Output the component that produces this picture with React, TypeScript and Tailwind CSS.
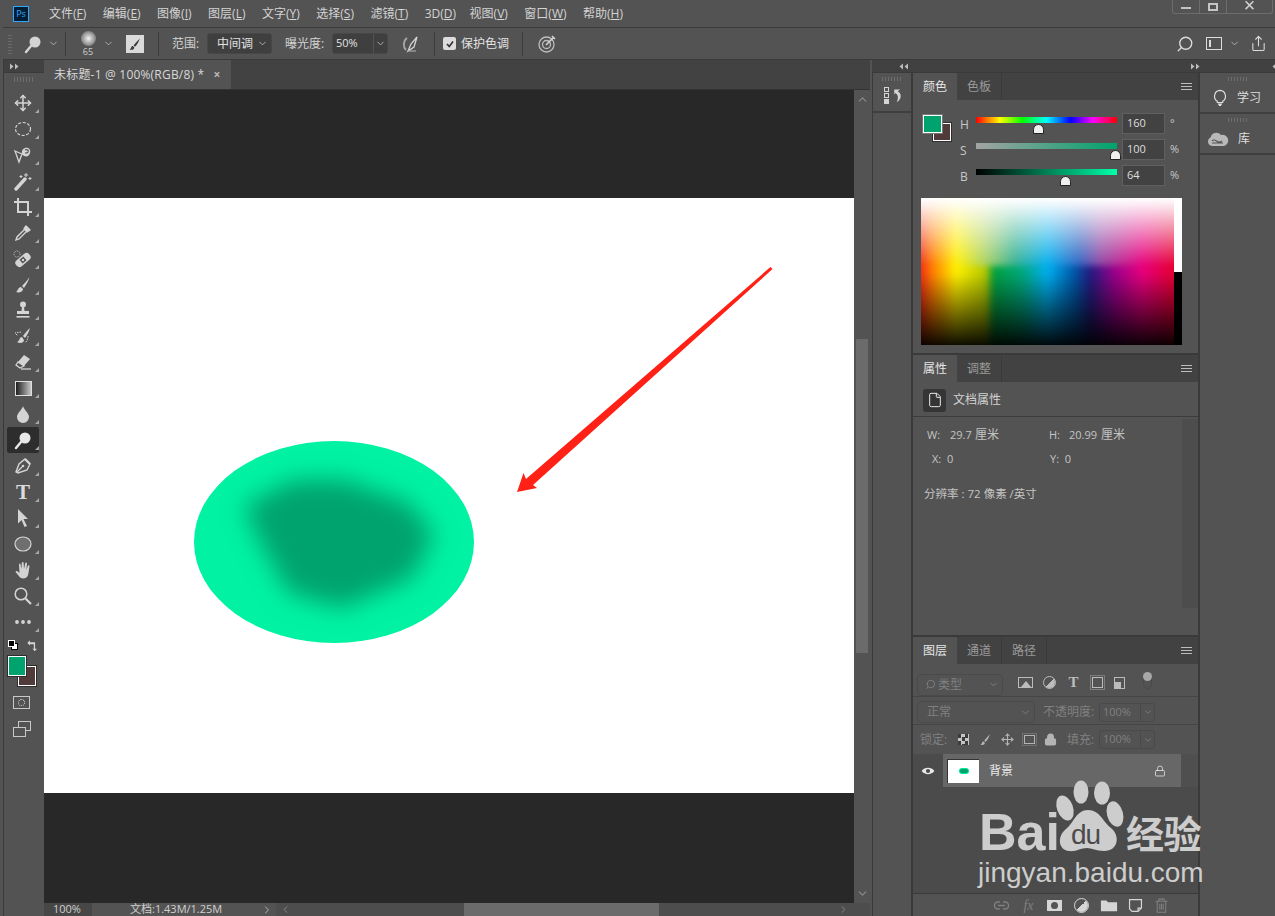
import React from 'react'
import { ChevronDown, ChevronUp, ChevronLeft, ChevronRight, Move, Search, Share, Lock, Link2, File } from 'lucide-react'

const MENU: [string, string][] = [
  ['文件', 'F'],
  ['编辑', 'E'],
  ['图像', 'I'],
  ['图层', 'L'],
  ['文字', 'Y'],
  ['选择', 'S'],
  ['滤镜', 'T'],
  ['3D', 'D'],
  ['视图', 'V'],
  ['窗口', 'W'],
  ['帮助', 'H'],
]

const C = '#d4d4d4'

function Svg({ children, size = 20 }: { children: React.ReactNode; size?: number }) {
  return (
    <svg width={size} height={size} viewBox="0 0 20 20" fill="none" className="block shrink-0">
      {children}
    </svg>
  )
}

// double arrows on the collapse strips
const Arrows = ({ left = false }: { left?: boolean }) => (
  <svg width="9" height="7" viewBox="0 0 9 7" className={left ? 'block -scale-x-100' : 'block'}>
    <path d="M0 0.5 L3.5 3.5 L0 6.5 Z M5 0.5 L8.5 3.5 L5 6.5 Z" fill="#bdbdbd" />
  </svg>
)

const DodgeIcon = ({ color = C }: { color?: string }) => (
  <Svg>
    <circle cx="12" cy="8" r="5.5" fill={color} />
    <path d="M8 12 L3 18" stroke={color} strokeWidth="2.4" strokeLinecap="round" />
  </Svg>
)

const TOOLS: React.ReactNode[] = [
  <Move size={18} color={C} strokeWidth={2} />,
  <Svg><ellipse cx="10" cy="10" rx="7.5" ry="6.5" stroke={C} strokeWidth="1.2" strokeDasharray="3 1.6" /></Svg>,
  <Svg>
    <path d="M2 6 L9 9 L6 17 Z" stroke={C} strokeWidth="1.3" />
    <path d="M9 9 C8 4 12 2 15 3 C18 4 18 9 15 11 C13 12 10 11 9 9 Z" fill={C} />
    <path d="M12 5 C14 4 16 5 15 7 M12 8 C14 8 15 8 15 7" stroke="#535353" strokeWidth="1.2" />
  </Svg>,
  <Svg>
    <path d="M3 18 L12 8" stroke={C} strokeWidth="3.4" strokeLinecap="round" />
    <path d="M13 2 v4 M11 4 h4 M17 6 v3 M15.5 7.5 h3 M8 4 v3 M6.5 5.5 h3" stroke={C} strokeWidth="1" />
  </Svg>,
  <Svg>
    <path d="M1 5 H15 V19 M5 1 V15 H19" stroke={C} strokeWidth="2" />
  </Svg>,
  <Svg>
    <path d="M13 3 L17 7 L14 9 L11 6 Z" fill={C} stroke={C} strokeWidth="1.5" strokeLinejoin="round" />
    <path d="M11 7 L4 14 L3 17 L6 16 L13 9" stroke={C} strokeWidth="1.4" />
  </Svg>,
  <Svg>
    <rect x="1.5" y="7" width="17" height="8" rx="3.5" transform="rotate(-40 10 11)" fill={C} />
    <circle cx="4" cy="5" r="3" stroke={C} strokeWidth="0.9" strokeDasharray="1 1" />
    <rect x="7.5" y="8.5" width="5" height="5" transform="rotate(-40 10 11)" fill="#535353" />
    <circle cx="10" cy="11" r="1.2" fill={C} />
  </Svg>,
  <Svg>
    <path d="M16.5 2 C14 6 11 9 9 11 L11 13 C13 10 15.5 6 16.5 2 Z" fill={C} />
    <path d="M8 12 C5 12 5 16 3 17 C6 18 10 17 10 14 Z" fill={C} />
  </Svg>,
  <Svg>
    <circle cx="10" cy="4.5" r="3" fill={C} />
    <path d="M9 7 h2 l0.5 4 h4.5 v3 h-12 v-3 h4.5 Z" fill={C} />
    <rect x="3.5" y="16" width="13" height="1.6" fill={C} />
  </Svg>,
  <Svg>
    <path d="M17 2 C14 5 12 7 10 10 L12 12 C14 9 16 6 17 2 Z" fill={C} />
    <path d="M9 11 C6 11 7 15 4 16 C7 18 11 17 11 14 Z" fill={C} />
    <path d="M8 6 L2 7 L5 10 M15 10 C15 13 14 15 12 17" stroke={C} strokeWidth="1" strokeDasharray="1.5 1" />
  </Svg>,
  <Svg>
    <path d="M11 3 L17 7 L11 14 L5 10 Z" fill={C} />
    <path d="M5 10 L3 13 L7 16 L9 15 L11 14 Z" stroke={C} strokeWidth="1.3" />
    <path d="M8 17 H18" stroke={C} strokeWidth="1.3" />
  </Svg>,
  <div className="h-[15px] w-[17px] border border-[#e0e0e0] bg-[linear-gradient(90deg,#1e1e1e,#c8c8c8)]" />,
  <Svg><path d="M10 2 C11 6 16 9 16 13 A6 6 0 0 1 4 13 C4 9 9 6 10 2 Z" fill={C} /></Svg>,
  <DodgeIcon color="#e8e8e8" />,
  <Svg>
    <path d="M13 2 L18 7 L15 13 L6 16 L4 15 L7 7 Z" stroke={C} strokeWidth="1.4" transform="translate(-1 1)" />
    <path d="M4 16 L9 11" stroke={C} strokeWidth="1.2" />
    <circle cx="10" cy="10" r="1.3" fill={C} />
    <path d="M12 3 L17 8" stroke={C} strokeWidth="2.2" />
  </Svg>,
  <span className="font-['Liberation_Serif',serif] text-[21px] leading-none font-bold text-[#dcdcdc]">T</span>,
  <Svg><path d="M5 1 L15 11 L10.5 11 L14 18 L11.5 19 L8.5 12 L5 15.5 Z" fill={C} /></Svg>,
  <Svg><ellipse cx="10" cy="10" rx="8" ry="7" fill="#6f6f6f" stroke={C} strokeWidth="1.2" /></Svg>,
  <Svg>
    <path d="M4 11 L6.5 13 L6 4 Q6.5 3 7.5 4 L8.5 9 L8.8 2.5 Q9.8 1.5 10.6 2.5 L11 9 L12.3 3 Q13.2 2 14 3.2 L13.4 10 L15 5.5 Q16 5 16.5 6 L15.5 13 Q15 18 10.5 18.5 Q7 18.5 5.5 15.5 L2.5 12 Q3 10.5 4 11 Z" fill={C} />
  </Svg>,
  <Svg>
    <circle cx="8" cy="8" r="5.8" stroke={C} strokeWidth="1.5" />
    <path d="M12.5 12.5 L18 18" stroke={C} strokeWidth="2.2" />
  </Svg>,
  <Svg>
    <circle cx="4" cy="10" r="1.9" fill={C} />
    <circle cx="10" cy="10" r="1.9" fill={C} />
    <circle cx="16" cy="10" r="1.9" fill={C} />
  </Svg>,
]

function ToolBar() {
  return (
    <div className="flex w-[41px] shrink-0 flex-col border-l border-[#3a3a3a] bg-[#535353]">
      <div className="flex h-[13px] items-center border-b border-[#3a3a3a] bg-[#414141] pl-[6px]">
        <Arrows />
      </div>
      <div className="mx-auto mt-[4px] h-[5px] w-[20px] bg-[repeating-linear-gradient(90deg,#6e6e6e_0_1px,transparent_1px_3px)]" />
      <div className="mt-[8px] flex flex-col pr-[2px] pl-[3px]">
        {TOOLS.map((t, i) => (
          <div
            key={i}
            className={
              i === 13
                ? 'relative flex h-[25.95px] w-[32px] items-center justify-center rounded-[2px] bg-[#2d2d2d]'
                : 'relative flex h-[25.95px] w-[32px] items-center justify-center'
            }
          >
            {t}
            <span className="absolute right-[0px] bottom-[3px] h-0 w-0 border-b-[4px] border-l-[4px] border-b-[#a8a8a8] border-l-transparent" />
          </div>
        ))}
      </div>
      <div className="mt-[4px] flex items-center gap-[7px] pl-[4px]">
        <div className="relative h-[11px] w-[11px]">
          <span className="absolute top-[3px] left-[3px] h-[7px] w-[7px] border border-black bg-white" />
          <span className="absolute top-0 left-0 h-[7px] w-[7px] border border-white bg-black" />
        </div>
        <Svg size={13}>
          <path d="M2 6 L6 2 L6 5 H14 V15 H17 L13.5 19 L10 15 H12 V8 H6 V10 Z" fill={C} />
        </Svg>
      </div>
      <div className="relative mt-[4px] ml-[4px] h-[30px] w-[30px]">
        <span className="absolute top-[10px] left-[10px] h-[20px] w-[18px] border-[1.5px] border-white bg-[#503a3a] outline outline-[#2d2d2d]" />
        <span className="absolute top-0 left-0 h-[20px] w-[18px] border-[1.5px] border-white bg-[#00a36d] outline outline-[#2d2d2d]" />
      </div>
      <div className="mt-[10px] flex flex-col items-center pr-[5px]">
        <div className="flex h-[13px] w-[17px] items-center justify-center border border-[#c8c8c8]">
          <span className="h-[7px] w-[7px] rounded-full border border-dotted border-[#dadada]" />
        </div>
        <div className="relative mt-[12px] h-[16px] w-[18px]">
          <span className="absolute top-0 right-0 h-[10px] w-[13px] border border-[#c8c8c8]" />
          <span className="absolute bottom-0 left-0 h-[10px] w-[13px] border border-[#c8c8c8] bg-[#535353]" />
        </div>
      </div>
    </div>
  )
}

function OptionsBar() {
  const Sep = () => <span className="block h-[24px] w-px bg-[#3c3c3c]" />
  return (
    <div className="ml-[3px] flex h-[33px] items-center border-y border-[#3a3a3a] text-[12px] text-[#d2d2d2]">
      <span className="ml-[5px] h-[20px] w-[4px] bg-[repeating-linear-gradient(0deg,#6a6a6a_0_1px,transparent_1px_3px)]" />
      <span className="ml-[11px]"><DodgeIcon /></span>
      <ChevronDown size={11} className="ml-[5px] text-[#b4b4b4]" />
      <span className="ml-[6px]"><Sep /></span>
      <div className="ml-[12px] flex w-[20px] flex-col items-center">
        <span className="h-[15px] w-[15px] rounded-full bg-[radial-gradient(circle,#f2f2f2,#909090_60%,#5a5a5a)]" />
        <span className="mt-px text-[9px] leading-none text-[#cfcfcf]">65</span>
      </div>
      <ChevronDown size={11} className="ml-[5px] text-[#b4b4b4]" />
      <div className="ml-[12px] flex h-[18px] w-[18px] items-center justify-center bg-[#dadada]">
        <Svg size={14}><path d="M17 2 C13 6 10 9 8 12 L10 14 C13 11 15 7 17 2 Z M7 13 C4 13 5 17 2 18 C6 19 9 18 9 15 Z" fill="#3c3c3c" /></Svg>
      </div>
      <span className="ml-[14px]"><Sep /></span>
      <span className="ml-[13px] w-[35px]">范围:</span>
      <div className="flex h-[21px] w-[65px] items-center justify-between rounded-[3px] border border-[#474747] bg-[#3f3f3f] pr-[3px] pl-[9px] text-[#e2e2e2]">
        中间调
        <ChevronDown size={11} className="text-[#b4b4b4]" />
      </div>
      <span className="ml-[13px] w-[47px]">曝光度:</span>
      <div className="flex h-[21px] w-[56px] items-center rounded-[3px] border border-[#474747] bg-[#3f3f3f] pl-[3px] text-[11px] text-[#e2e2e2]">
        <span className="w-[37px]">50%</span>
        <span className="flex h-full flex-1 items-center justify-center border-l border-[#535353]">
          <ChevronDown size={11} className="text-[#b4b4b4]" />
        </span>
      </div>
      <span className="ml-[12px]">
        <Svg>
          <path d="M7 4 C3 7 3 13 6 16" stroke="#a8a8a8" strokeWidth="1.8" />
          <path d="M17 3 L11 10 L8 17 L14 13 Z" stroke={C} strokeWidth="1.3" />
          <path d="M8 17 H16" stroke="#a8a8a8" strokeWidth="1.2" />
        </Svg>
      </span>
      <span className="ml-[14px]"><Sep /></span>
      <span className="ml-[8px] flex h-[13px] w-[13px] items-center justify-center rounded-[2px] bg-[#dcdcdc]">
        <Svg size={10}><path d="M4 10 L8.5 15 L16 5" stroke="#333" strokeWidth="3.4" /></Svg>
      </span>
      <span className="ml-[5px] text-[12px] text-[#e4e4e4]">保护色调</span>
      <span className="ml-[13px]"><Sep /></span>
      <span className="ml-[14px]">
        <Svg>
          <circle cx="9.5" cy="10.5" r="7.5" stroke="#bdbdbd" strokeWidth="1.3" />
          <circle cx="9.5" cy="10.5" r="4" stroke="#bdbdbd" strokeWidth="1.3" />
          <path d="M9 11 L17 3 M15 2 L18 5" stroke={C} strokeWidth="1.6" />
        </Svg>
      </span>
      <div className="ml-auto flex items-center pr-[8px]">
        <Search size={18} strokeWidth={1.8} className="-scale-x-100 text-[#dcdcdc]" />
        <span className="ml-[12px] flex h-[13px] w-[16px] items-center border border-[#dcdcdc] pl-[2px]">
          <span className="h-[7px] w-[2px] bg-[#dcdcdc]" />
        </span>
        <ChevronDown size={11} className="ml-[7px] text-[#b4b4b4]" />
        <Share size={17} strokeWidth={1.5} className="ml-[10px] text-[#dcdcdc]" />
      </div>
    </div>
  )
}

function CanvasDrawing() {
  return (
    <svg viewBox="0 0 810 595" className="block h-full w-full">
      <defs>
        <filter id="soft" x="-30%" y="-30%" width="160%" height="160%">
          <feGaussianBlur stdDeviation="12" />
        </filter>
        <clipPath id="oval">
          <ellipse cx="290" cy="344" rx="140" ry="101" />
        </clipPath>
      </defs>
      <ellipse cx="290" cy="344" rx="140" ry="101" fill="#00f2a2" />
      <g clipPath="url(#oval)">
        <path d="M200 308 L250 282 L300 282 L365 305 L390 337 L368 380 L298 410 L245 395 L218 347 Z" fill="#00a36d" filter="url(#soft)" />
      </g>
      <path d="M726.5 69 L728.5 71 L489 287 L493 290 L473 294 L479.5 275 L482 281 Z" fill="#ff2016" />
    </svg>
  )
}

function DocArea() {
  return (
    <div className="flex w-[826px] shrink-0 flex-col">
      <div className="flex h-[30px] shrink-0 border-b border-[#333] bg-[#424242]">
        <div className="flex w-[187px] items-center bg-[#535353] pl-[10px] text-[12px] tracking-[0.2px] text-[#d8d8d8]">
          未标题-1 @ 100%(RGB/8) *
          <span className="ml-[9px] text-[12px] font-bold text-[#b8b8b8]">×</span>
        </div>
      </div>
      <div className="flex min-h-0 flex-1">
        <div className="flex w-[810px] flex-col bg-[#282828] pt-[108px]">
          <div className="h-[595px] bg-white">
            <CanvasDrawing />
          </div>
        </div>
        <div className="flex w-[16px] flex-col items-center bg-[#535353]">
          <ChevronUp size={13} className="mt-[3px] text-[#8c8c8c]" />
          <div className="mt-[233px] h-[314px] w-[12px] bg-[#6b6b6b]" />
          <ChevronDown size={13} className="mt-auto mb-[3px] text-[#8c8c8c]" />
        </div>
      </div>
      <div className="flex h-[13px] shrink-0 items-center bg-[#474747] text-[11px] text-[#d0d0d0]">
        <span className="w-[48px] pl-[9px]">100%</span>
        <div className="flex h-full w-[184px] items-center bg-[#535353] pl-[38px]">
          文档:1.43M/1.25M
          <ChevronRight size={12} className="mr-[3px] ml-auto text-[#b4b4b4]" />
        </div>
        <div className="flex h-full flex-1 items-center bg-[#4d4d4d]">
          <ChevronLeft size={11} className="ml-[4px] text-[#8c8c8c]" />
          <div className="ml-[173px] h-full w-[195px] bg-[#6b6b6b]" />
          <ChevronRight size={11} className="mr-[21px] ml-auto text-[#8c8c8c]" />
        </div>
      </div>
    </div>
  )
}

function Tabs({ items }: { items: string[] }) {
  return (
    <div className="flex h-[27px] shrink-0 items-stretch bg-[#424242] text-[12px]">
      {items.map((t, i) => (
        <div
          key={t}
          className={
            i === 0
              ? 'flex w-[44px] items-center justify-center bg-[#535353] pt-px text-[#e6e6e6]'
              : 'flex w-[45px] items-center justify-center border-r border-[#3a3a3a] pt-px text-[#9a9a9a]'
          }
        >
          {t}
        </div>
      ))}
      <div className="ml-auto flex items-center pr-[6px]">
        <span className="h-[7px] w-[11px] border-y border-[#bdbdbd] after:mt-[2px] after:block after:h-px after:bg-[#bdbdbd]" />
      </div>
    </div>
  )
}

function SliderRow({ label, unit, value, pos, track }: { label: string; unit: string; value: string; pos: string; track: string }) {
  return (
    <div className="flex h-[21px] items-start text-[12px] text-[#c8c8c8]">
      <span className="w-[16px] pt-[3px] leading-[18px]">{label}</span>
      <div className={`relative mt-[4px] h-[6px] w-[141px] ${track}`}>
        <span className={`absolute top-[7px] h-[10px] w-[11px] rounded-t-full rounded-b-[2px] border border-[#222] bg-[#efefef] ${pos}`} />
      </div>
      <span className="ml-[5px] flex h-[21px] w-[43px] items-center border border-[#606060] bg-[#424242] pl-[4px] text-[11px] text-[#dedede]">{value}</span>
      <span className="ml-[5px] pt-[1px] text-[11px] leading-[18px]">{unit}</span>
    </div>
  )
}

function ColorPanel() {
  return (
    <div className="flex h-[280px] shrink-0 flex-col bg-[#535353]">
      <Tabs items={['颜色', '色板']} />
      <div className="flex pt-[13px] pl-[9px]">
        <div className="relative h-[29px] w-[38px]">
          <span className="absolute top-[10px] left-[11px] h-[18px] w-[18px] border border-white bg-[#503a3a] outline outline-[#2d2d2d]" />
          <span className="absolute top-[2px] left-[1px] h-[18px] w-[19px] border border-white bg-[#00a36d] outline outline-[#777]" />
        </div>
        <div className="flex flex-col gap-[5px]">
          <SliderRow
            label="H"
            unit="°"
            value="160"
            pos="left-[57px]"
            track="bg-[linear-gradient(90deg,#f00,#ff0_17%,#0f0_33%,#0ff_50%,#00f_67%,#f0f_83%,#f00)]"
          />
          <SliderRow label="S" unit="%" value="100" pos="left-[134px]" track="bg-[linear-gradient(90deg,#a3a3a3,#00a36d)]" />
          <SliderRow label="B" unit="%" value="64" pos="left-[84px]" track="bg-[linear-gradient(90deg,#000,#00ffaa)]" />
        </div>
      </div>
      <div className="mt-[12px] ml-[8px] flex h-[147px] w-[261px]">
        <div className="relative h-full w-[253px] overflow-hidden">
          <div className="absolute -inset-[8px] flex flex-col blur-[3px]">
            <div className="relative h-[76px] bg-[linear-gradient(90deg,#e60020,#ff7a00_7%,#fff000_16%,#a8d060_27%,#30b090_38%,#00aeef_50%,#3060c0_62%,#9040a0_70%,#e6007e_85%,#e60020)]">
              <div className="absolute inset-0 bg-[linear-gradient(180deg,#fff_12%,transparent)]" />
            </div>
            <div className="relative flex-1 bg-[linear-gradient(90deg,#e60020,#ff7a00_7%,#fff000_16%,#b5c800_27%,#00a040_30%,#00a878_40%,#00aeef_50%,#0058a8_60%,#241a80_66%,#9a008c_75%,#e6007e_85%,#e60020)]">
              <div className="absolute inset-0 bg-[linear-gradient(180deg,transparent_8%,#000_96%)]" />
            </div>
          </div>
        </div>
        <div className="flex w-[8px] flex-col">
          <div className="h-[74px] bg-white" />
          <div className="flex-1 bg-black" />
        </div>
      </div>
    </div>
  )
}

function PropsPanel() {
  return (
    <div className="flex h-[280px] shrink-0 flex-col bg-[#535353]">
      <Tabs items={['属性', '调整']} />
      <div className="flex h-[35px] shrink-0 items-center gap-[7px] border-b border-[#3c3c3c] pt-[2px] pl-[10px] text-[12px] text-[#d2d2d2]">
        <span className="flex h-[23px] w-[23px] items-center justify-center rounded-[3px] bg-[#353535]">
          <File size={16} strokeWidth={1.5} className="text-[#e8e8e8]" />
        </span>
        文档属性
      </div>
      <div className="flex min-h-0 flex-1">
        <div className="flex-1 text-[11px] text-[#c4c4c4]">
          <div className="grid grid-cols-[122px_1fr] gap-y-[10px] pt-[11px] pl-[14px] leading-[14px]">
            <span className="flex">
              <span className="w-[23px]">W:</span>
              <span className="w-[25px]">29.7</span>
              <span className="text-[12px]">厘米</span>
            </span>
            <span className="flex">
              <span className="w-[20px]">H:</span>
              <span className="w-[32px]">20.99</span>
              <span className="text-[12px]">厘米</span>
            </span>
            <span className="pl-[5px]">X:&nbsp; 0</span>
            <span className="pl-[1px]">Y:&nbsp; 0</span>
          </div>
          <div className="mt-[19px] pl-[11px] text-[11.5px]">分辨率 : 72 像素 /英寸</div>
        </div>
        <div className="mt-[2px] mb-[27px] w-[16px] bg-[#4d4d4d]" />
      </div>
    </div>
  )
}

function LayersPanel() {
  const dim = 'text-[#808080]'
  const Field = ({ w = 'w-[56px]' }: { w?: string }) => (
    <span className={`flex h-[19px] ${w} items-center rounded-[3px] border border-[#4a4a4a] pl-[3px] text-[11px] ${dim}`}>
      <span className="w-[37px]">100%</span>
      <span className="flex h-full flex-1 items-center justify-center border-l border-[#4a4a4a]">
        <ChevronDown size={10} />
      </span>
    </span>
  )
  return (
    <div className="flex min-h-0 flex-1 flex-col bg-[#535353]">
      <Tabs items={['图层', '通道', '路径']} />
      <div className="flex h-[33px] shrink-0 items-center border-b border-[#454545] pt-[9px] pl-[4px]">
        <div className={`flex h-[22px] w-[86px] items-center rounded-[4px] border border-[#4a4a4a] pl-[7px] text-[12px] ${dim}`}>
          <Search size={11} strokeWidth={2} className="mr-[2px] -scale-x-100" />
          类型
          <ChevronDown size={11} className="mr-[3px] ml-auto" />
        </div>
        <div className="mb-[4px] ml-[15px] flex items-center gap-[11px] text-[#bcbcbc]">
          <span className="flex h-[11px] w-[15px] items-end justify-center border border-[#bcbcbc]">
            <span className="h-0 w-0 border-x-[5px] border-b-[6px] border-x-transparent border-b-[#bcbcbc]" />
          </span>
          <span className="h-[11px] w-[11px] rounded-full bg-[linear-gradient(135deg,#535353_50%,#bcbcbc_50%)] outline outline-[#bcbcbc]" />
          <span className="w-[15px] text-center font-['Liberation_Serif',serif] text-[15px] leading-none font-bold">T</span>
          <span className="h-[11px] w-[11px] border border-[#bcbcbc] outline outline-offset-[1px] outline-[#bcbcbc]/40" />
          <span className="flex h-[12px] w-[11px] items-end border border-[#bcbcbc]"><span className="h-[6px] w-[6px] bg-[#bcbcbc]" /></span>
        </div>
        <span className="relative mb-[9px] ml-[18px] h-[17px] w-[9px] rounded-full border border-[#4a4a4a]">
          <span className="absolute -top-[1px] -left-[1px] h-[9px] w-[9px] rounded-full bg-[#a8a8a8]" />
        </span>
      </div>
      <div className="flex h-[28px] shrink-0 items-center border-b border-[#454545] pt-[3px] pl-[4px]">
        <div className={`flex h-[22px] w-[118px] items-center rounded-[4px] border border-[#4a4a4a] pl-[9px] text-[12px] ${dim}`}>
          正常
          <ChevronDown size={11} className="mr-[3px] ml-auto" />
        </div>
        <span className={`ml-[8px] w-[56px] text-[12px] ${dim}`}>不透明度:</span>
        <Field />
      </div>
      <div className="flex h-[29px] shrink-0 items-center pl-[7px]">
        <span className={`w-[38px] text-[12px] ${dim}`}>锁定:</span>
        <div className="flex w-[109px] items-center gap-[9.5px] text-[#b4b4b4]">
          <span className="h-[11px] w-[11px] bg-[repeating-conic-gradient(#c4c4c4_0_25%,#3c3c3c_0_50%)] bg-[length:7px_7px]" />
          <Svg size={13}><path d="M17 2 C13 6 10 9 8 12 L10 14 C13 11 15 7 17 2 Z M7 13 C4 13 5 17 2 18 C6 19 9 18 9 15 Z" fill="#b4b4b4" /></Svg>
          <Move size={13} strokeWidth={2} />
          <span className="h-[9px] w-[11px] border border-[#b4b4b4] outline outline-offset-[1px] outline-[#b4b4b4]/30" />
          <Lock size={13} strokeWidth={2.6} fill="#b4b4b4" />
        </div>
        <span className={`w-[32px] text-[12px] ${dim}`}>填充:</span>
        <Field />
      </div>
      <div className="flex min-h-0 flex-1 flex-col bg-[#4b4b4b]">
        <div className="flex h-[33px] shrink-0 bg-[#4f4f4f]">
          <div className="flex w-[30px] items-center justify-center bg-[#4b4b4b]">
            <Svg size={14}>
              <path d="M1 10 C5 4 15 4 19 10 C15 16 5 16 1 10 Z" fill="#e8e8e8" />
              <circle cx="10" cy="10" r="3" fill="#4b4b4b" />
            </Svg>
          </div>
          <div className="flex w-[238px] items-center bg-[#676767] pl-[4px] text-[12px] text-[#ececec]">
            <div className="flex h-[24px] w-[32px] items-center justify-center border-t border-l border-[#333] bg-white">
              <span className="relative h-[6px] w-[10px] rounded-full bg-[#00e69a]">
                <span className="absolute inset-[1px] rounded-full bg-[#00a36d]" />
              </span>
            </div>
            <span className="ml-[10px]">背景</span>
            <Lock size={12} strokeWidth={1.6} className="mr-[15px] ml-auto text-[#e4e4e4]" />
          </div>
        </div>
        <div className="flex-1" />
        <div className="flex h-[23px] shrink-0 items-center border-t border-[#3a3a3a] bg-[#535353] pl-[80px]">
          <Link2 size={17} className="text-[#808080]" />
          <span className="ml-[10px] w-[17px] text-center font-['Liberation_Serif',serif] text-[14px] text-[#808080] italic">fx</span>
          <span className="ml-[10px] flex h-[11px] w-[15px] items-center justify-center bg-[#d6d6d6]">
            <span className="h-[7px] w-[7px] rounded-full bg-[#535353]" />
          </span>
          <span className="ml-[13px] h-[13px] w-[13px] rounded-full bg-[linear-gradient(135deg,#535353_50%,#d6d6d6_50%)] outline outline-[#d6d6d6]" />
          <span className="ml-[12px]">
            <Svg size={18}><path d="M1 5 H7 L9 7 H19 V17 H1 Z" fill="#d6d6d6" /></Svg>
          </span>
          <span className="ml-[9px]">
            <Svg size={17}><path d="M3 3 H17 V13 L13 17 H6 L3 14 Z M17 13 H13 V17" stroke="#d6d6d6" strokeWidth="1.4" /></Svg>
          </span>
          <span className="ml-[9px]">
            <Svg size={17}><path d="M3 5 H17 M7 5 V2.5 H13 V5 M5 5 V18 H15 V5 M8 8 V15 M10 8 V15 M12 8 V15" stroke="#808080" strokeWidth="1.2" /></Svg>
          </span>
        </div>
      </div>
    </div>
  )
}

function Grip() {
  return <div className="mx-auto h-[4px] w-[20px] bg-[repeating-linear-gradient(90deg,#6e6e6e_0_1px,transparent_1px_3px)]" />
}

function Dock() {
  return (
    <div className="flex min-w-0 flex-1 flex-col pl-[2px]">
      <div className="flex h-[13px] shrink-0 items-center border-b border-[#3a3a3a] bg-[#414141]">
        <span className="ml-[27px]"><Arrows left /></span>
        <span className="ml-[283px]"><Arrows /></span>
        <span className="ml-[72px]"><Arrows left /></span>
      </div>
      <div className="flex min-h-0 flex-1 gap-[2px] border-l border-[#3a3a3a] bg-[#3a3a3a]">
        <div className="w-[38px] shrink-0 bg-[#535353]">
          <div className="h-[40px] border-b-2 border-[#3f3f3f] pt-[4px]">
            <Grip />
            <div className="mt-[6px] ml-[6px] flex items-center justify-center gap-[1px]">
              <div className="flex flex-col gap-[1px]">
                <span className="h-[5px] w-[5px] border border-[#d4d4d4]" />
                <span className="h-[5px] w-[5px] border border-[#d4d4d4]" />
                <span className="h-[5px] w-[5px] bg-[#d4d4d4]" />
              </div>
              <Svg size={17}><path d="M5 3 H12 L9 5 C14 8 14 14 8 18 C10 13 10 9 6 7 L5 9 Z" fill={C} /></Svg>
            </div>
          </div>
        </div>
        <div className="flex w-[285px] shrink-0 flex-col gap-[2px]">
          <ColorPanel />
          <PropsPanel />
          <LayersPanel />
        </div>
        <div className="flex-1 bg-[#535353] text-[12px] text-[#dedede]">
          <div className="h-[41px] border-b-2 border-[#3f3f3f] pt-[4px]">
            <Grip />
            <div className="mt-[8px] flex items-center pl-[11px]">
              <Svg size={18}>
                <path d="M10 1.5 A6.5 6.5 0 0 1 13 13.5 V15 H7 V13.5 A6.5 6.5 0 0 1 10 1.5 Z" stroke="#dedede" strokeWidth="1.3" />
                <path d="M7.5 16 H12.5 L11 19 H9 Z" fill="#dedede" />
              </Svg>
              <span className="ml-[8px]">学习</span>
            </div>
          </div>
          <div className="h-[41px] border-b-2 border-[#3f3f3f] pt-[4px]">
            <Grip />
            <div className="mt-[8px] flex items-center pl-[7px]">
              <svg width="22" height="15" viewBox="0 0 22 15" className="block">
                <path d="M5 14 A4.5 4.5 0 0 1 3.5 5.5 A6 6 0 0 1 14 3 A5.5 5.5 0 0 1 17 14 Z" fill="#b8b8b8" />
                <path d="M5 9 C8 5 11 13 15 9 M5 11 H16" stroke="#535353" strokeWidth="1.1" fill="none" />
              </svg>
              <span className="ml-[9px]">库</span>
            </div>
          </div>
        </div>
      </div>
    </div>
  )
}

function Watermark() {
  return (
    <div className="pointer-events-none absolute top-[770px] left-[960px] h-[125px] w-[260px] text-[#cdcdcd]">
      <svg width="260" height="90" viewBox="0 0 260 90" className="absolute top-0 left-0">
        <ellipse cx="105" cy="38" rx="8" ry="13" transform="rotate(-20 105 38)" fill="#cdcdcd" />
        <ellipse cx="121" cy="22" rx="7.5" ry="11.5" fill="#cdcdcd" />
        <ellipse cx="142" cy="23" rx="8" ry="11.5" fill="#cdcdcd" />
        <ellipse cx="155" cy="44" rx="8" ry="13" transform="rotate(-15 155 44)" fill="#cdcdcd" />
        <path d="M128 40 C140 40 143 52 151 58 C160 65 159 81 144 81 C136 81 132 78 127 78 C120 78 116 82 109 81 C98 80 97 66 106 59 C114 53 116 40 128 40 Z" fill="#cdcdcd" />
      </svg>
      <span className="absolute top-[51px] left-[111px] font-['Liberation_Sans',sans-serif] text-[28px] leading-none tracking-[-1px] text-[#4b4b4b]">du</span>
      <span className="absolute top-[36px] left-[19px] font-['Liberation_Sans',sans-serif] text-[52px] leading-none font-bold">Bai</span>
      <span className="absolute top-[39px] left-[166px] font-['Noto_Sans_CJK_SC',sans-serif] text-[38px] leading-[46px] font-bold tracking-[-0.5px]">经验</span>
      <span className="absolute top-[89px] left-[18px] font-['Liberation_Sans',sans-serif] text-[28px] leading-none">jingyan.baidu.com</span>
    </div>
  )
}

export default function App() {
  return (
    <div className="relative flex h-[916px] w-[1275px] flex-col overflow-hidden bg-[#535353] font-['Open_Sans','Noto_Sans_CJK_SC',sans-serif]">
      <div className="relative flex h-[27px] shrink-0 items-center text-[12px] text-[#d4d4d4]">
        <span className="ml-[13px] flex h-[16px] w-[16px] items-center justify-center border border-[#31a8ff] bg-[#001e36] text-[9px] leading-none text-[#31a8ff]">
          Ps
        </span>
        <div className="ml-[20px] flex gap-[16.5px]">
          {MENU.map(([name, key]) => (
            <span key={key} className={key === 'D' ? 'mr-[-3px] whitespace-nowrap' : 'whitespace-nowrap'}>
              {name}(<u>{key}</u>)
            </span>
          ))}
        </div>
        <div className="absolute top-0 right-[2px] flex h-[14px] w-[101px] rounded-b-[3px] border border-t-0 border-[#6c6c6c]">
          <span className="flex w-[27px] items-center justify-center border-r border-[#6c6c6c]">
            <span className="mt-[3px] h-[2px] w-[10px] bg-[#c4c4c4]" />
          </span>
          <span className="flex w-[27px] items-center justify-center border-r border-[#6c6c6c]">
            <span className="h-[8px] w-[10px] border-2 border-[#c4c4c4]" />
          </span>
          <span className="flex flex-1 items-center justify-center">
            <Svg size={13}><path d="M4 2 L16 14 M16 2 L4 14" stroke="#d0d0d0" strokeWidth="2.4" /></Svg>
          </span>
        </div>
      </div>
      <OptionsBar />
      <div className="flex min-h-0 flex-1">
        <div className="w-[3px] shrink-0" />
        <ToolBar />
        <DocArea />
        <Dock />
      </div>
      <Watermark />
    </div>
  )
}
